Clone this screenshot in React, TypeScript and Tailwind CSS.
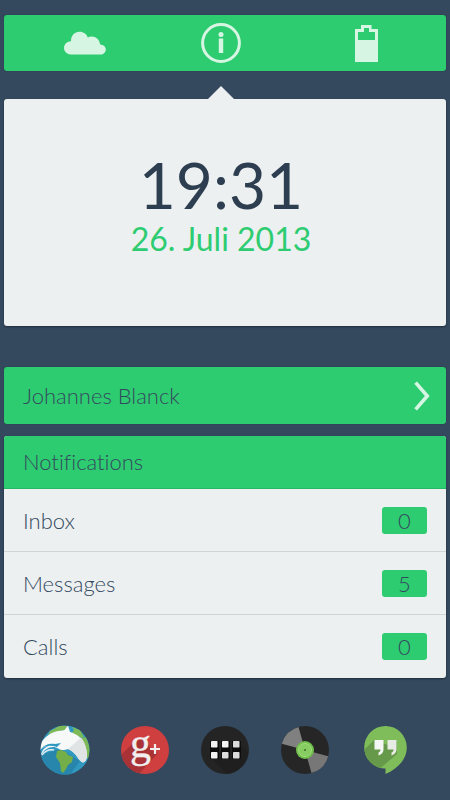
import type { ReactNode } from "react";

const notifications = [
  { label: "Inbox", count: 0 },
  { label: "Messages", count: 5 },
  { label: "Calls", count: 0 },
];

function CloudIcon() {
  return (
    <svg width="42" height="24" viewBox="0 0 42 24" fill="#d7f5e3">
      <path d="M7 23.500C3 23.500 0 20.500 0 17s3-6.800 7-6.800C7 4.500 10.500.8 15.500.8c4 0 7 2.200 8.300 5.600 1-.6 2.300-.9 3.700-.9 4.700 0 8 3.200 8.700 7.900 3.300.2 5.600 2.300 5.600 5.100 0 2.900-2.300 5-5.400 5z" />
    </svg>
  );
}

function InfoIcon() {
  return (
    <svg width="40" height="40" viewBox="0 0 40 40" fill="#d7f5e3">
      <circle cx="20" cy="20" r="18.400" fill="none" stroke="#d7f5e3" strokeWidth="3" />
      <circle cx="20" cy="11.500" r="2.500" />
      <rect x="17.800" y="15.500" width="4.400" height="14.500" />
    </svg>
  );
}

function BatteryIcon() {
  return (
    <svg width="23" height="38" viewBox="0 0 23 38" fill="#d7f5e3" fillRule="evenodd">
      <path d="M0 5h6V1h10.500v4H23v33H0zM3 8v8h17V8h-6V4H9v4z" />
    </svg>
  );
}

function ChevronIcon() {
  return (
    <svg width="16" height="30" viewBox="0 0 16 30" fill="none" stroke="#d7f5e3" strokeWidth="3.600">
      <path d="M1.600 1.600 13.300 15 1.600 28.400" />
    </svg>
  );
}

function BrowserIcon() {
  return (
    <svg width="50" height="50" viewBox="0 0 50 50">
      <defs>
        <clipPath id="globe">
          <circle cx="25" cy="25" r="24.500" />
        </clipPath>
      </defs>
      <g clipPath="url(#globe)">
        <rect width="50" height="50" fill="#3199c0" />
        <path d="M0 30 20 24 40 36 30 50H0z" fill="#2885ac" />
        <path d="M10 6 16 3l3-3 8 1-1 4-6 1-4 3-4-1-4 2z" fill="#7db957" />
        <path d="m32 2 8 3 4 7-3 1-3-2-3 1-3-4 2-3z" fill="#7db957" />
        <path d="m42 13 4-1 4 11-1 12-3-4-1-8-4-6z" fill="#7db957" />
        <path d="m17 26 4-1 5 2 2 3 5 2-1 5-4 3-2 4-3 4-2-2-1-8-4-6z" fill="#74ae48" />
        {/* Dolphin */}
        <path d="M0 19C5 12 10 8 16 6.500c3-1 6-.8 8.500-1.500L28 .5 30 7c7 2 12 6 14.500 12 1.700 4 2.500 8 2.500 12-.3 3.500-1.700 6-4 6.500-2-.4-4-3-6-6-2.500-3.500-5.500-6-9-7.500-3 1.500-7 1.500-10-.5-1.500-1-3-1.500-5-1.500C8 22 4 25 1 30c1-5 4-8 8-9-3-.2-6 1-9 4z" fill="#f7f8f8" />
        <path d="M28 24 41 12.500c4 5 6 12 6 18.500-.3 3.500-1.700 6-4 6.500-2-.4-4-3-6-6-2.500-3.500-5.500-6-9-7.500z" fill="#e1e4e5" />
        <path d="M1 24c3-4 8-6 14-5l6-1-4 4c-6-2-12-2-16 2z" fill="#3199c0" />
        <path d="M2 30c3-4 7-6 12-5" fill="none" stroke="#e4eef2" strokeWidth="1.500" />
      </g>
    </svg>
  );
}

function GooglePlusIcon() {
  return (
    <svg className="overflow-visible" width="48" height="48" viewBox="0 0 48 48">
      <defs>
        <clipPath id="plus-disc">
          <circle cx="24" cy="24" r="24" />
        </clipPath>
      </defs>
      <g clipPath="url(#plus-disc)">
        <rect width="48" height="48" fill="#cf3f40" />
        <path d="M12 17 0 29v19h18l19-21-7-3-5-13z" fill="#a93236" />
      </g>
      <text
        x="9"
        y="31"
        className="font-['Liberation_Serif',serif] text-[42px] font-normal"
        fill="#f1eeee"
        stroke="#f1eeee"
        strokeWidth=".4"
      >
        g
      </text>
      <path d="M29 23h10M34 18v10" stroke="#f1eeee" strokeWidth="2.200" />
    </svg>
  );
}

function AppsIcon() {
  return (
    <svg width="48" height="48" viewBox="0 0 48 48">
      <circle cx="24" cy="24" r="24" fill="#242424" />
      <path d="M38 17 47 26a24 24 0 0 1-21 22L10 32z" fill="#1f1f1f" />
      {[10, 21, 32].map((x, i) => (
        <g key={x}>
          <rect x={x - 1} y="15" width="9" height="18" fill="#0d0d0d" />
          <rect x={x} y="15" width="6.500" height="6.500" rx=".8" fill={i === 2 ? "#dcdcdc" : "#f3f3f3"} />
          <rect x={x} y="26" width="6.500" height="6.500" rx=".8" fill={i === 0 ? "#f3f3f3" : "#dcdcdc"} />
        </g>
      ))}
    </svg>
  );
}

function MusicIcon() {
  return (
    <svg width="48" height="48" viewBox="0 0 48 48">
      <circle cx="24" cy="24" r="24" fill="#262626" />
      <path d="M24 24 .8 17.800A24 24 0 0 1 17.500.9z" fill="#808080" />
      <path d="m24 24 23.200 6.200A24 24 0 0 1 30.500 47.100z" fill="#777777" />
      <circle cx="24" cy="24" r="9" fill="#72c04c" />
      <circle cx="24" cy="24" r="6.500" fill="#86cc60" stroke="#a0dc7e" />
      <circle cx="24" cy="24" r="1" fill="#3c6b2b" />
    </svg>
  );
}

function HangoutsIcon() {
  return (
    <svg width="43" height="48" viewBox="0 0 43 48">
      <defs>
        <clipPath id="bubble">
          <path d="M21.500 0a21.300 21.300 0 0 1 21.300 21.300c0 12-9 21.500-21.300 26.700v-5.400a21.300 21.300 0 0 1 0-42.600z" />
        </clipPath>
      </defs>
      <g clipPath="url(#bubble)">
        <rect width="43" height="48" fill="#7fbd5b" />
        <path d="M10 14 0 24v14l12 8 21-18V15l-9 4z" fill="#67994b" />
      </g>
      <path d="M10.500 14h9v9.500c0 3-2 5-5 6v-3c1.500-.6 2-1.700 2-3h-6z" fill="#f5f7f4" />
      <path d="M23.500 14h9v9.500c0 3-2 5-5 6v-3c1.500-.6 2-1.700 2-3h-6z" fill="#e6ebe3" />
    </svg>
  );
}

const dock: { name: string; icon: ReactNode }[] = [
  { name: "Browser", icon: <BrowserIcon /> },
  { name: "Google+", icon: <GooglePlusIcon /> },
  { name: "Apps", icon: <AppsIcon /> },
  { name: "Music", icon: <MusicIcon /> },
  { name: "Hangouts", icon: <HangoutsIcon /> },
];

export default function App() {
  return (
    <div className="min-h-screen bg-[#34495e] px-1 pt-[15px] pb-6 font-['Lato',sans-serif] text-[#34495e] [font-variant-ligatures:none]">
      <nav className="grid h-14 grid-cols-[136fr_136fr_154fr] place-items-center rounded-[3px] bg-[#2ecc71] pr-[3px] pl-[13px] shadow-[0_0_1px_#1f2d3a]">
        <button aria-label="Weather">
          <CloudIcon />
        </button>
        <button aria-label="Info">
          <InfoIcon />
        </button>
        <button aria-label="Battery">
          <BatteryIcon />
        </button>
      </nav>

      <section className="relative mt-7 flex h-[227px] flex-col items-center rounded-[3px] bg-[#ecf0f1] pt-12 pr-2 shadow-[0_1px_2px_#1f2d3a]">
        {/* Pointer towards the active tab */}
        <svg className="absolute -top-[13px] left-[203px]" width="28" height="14" viewBox="0 0 28 14">
          <path d="M0 14 14 0l14 14z" fill="#ecf0f1" />
        </svg>
        <time className="text-[64px] leading-[76px] text-[#2c3e50]">19:31</time>
        <p className="text-[32px] leading-[32px] text-[#2ecc71]">26. Juli 2013</p>
      </section>

      <button className="mt-[41px] flex h-[57px] w-full items-center justify-between rounded-[3px] bg-[#2ecc71] pr-4 pl-[19px] text-[22px] font-light shadow-[0_0_1px_#1f2d3a]">
        Johannes Blanck
        <ChevronIcon />
      </button>

      <section className="mt-3 overflow-hidden rounded-[3px] bg-[#ecf0f1] text-[22px] font-light shadow-[0_1px_2px_#1f2d3a]">
        <h2 className="flex h-[53px] items-center border-b border-[#27b864] bg-[#2ecc71] px-[19px] pb-[2px]">
          Notifications
        </h2>
        <ul className="divide-y divide-[#cfd6d8]">
          {notifications.map((item) => (
            <li key={item.label} className="flex h-[63px] items-center justify-between px-[19px]">
              {item.label}
              <span className="flex h-[27px] w-[45px] items-center justify-center rounded-[3px] bg-[#2ecc71]">
                {item.count}
              </span>
            </li>
          ))}
        </ul>
      </section>

      <footer className="mt-[47px] grid grid-cols-5 place-items-center px-[21px]">
        {dock.map((app) => (
          <button key={app.name} aria-label={app.name}>
            {app.icon}
          </button>
        ))}
      </footer>
    </div>
  );
}
